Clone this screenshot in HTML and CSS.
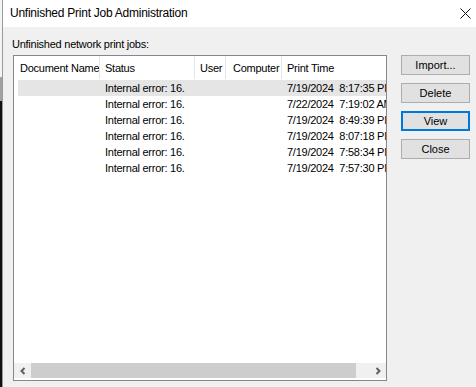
FILE: index.html
```html
<!DOCTYPE html>
<html lang="en">
<head>
  <meta charset="UTF-8">
  <title>Unfinished Print Job Administration</title>
  <link rel="stylesheet" href="styles.css">
</head>
<body>
  <div class="desk"></div>
  <div class="window">
    <div class="titlebar">
      <span class="title">Unfinished Print Job Administration</span>
      <svg class="close" width="11" height="11" viewBox="0 0 11 11">
        <path d="M0.5 0.5 L10.5 10.5 M10.5 0.5 L0.5 10.5" stroke="#111" stroke-width="1" fill="none"/>
      </svg>
    </div>

    <div class="content">
      <div class="left">
        <div class="label">Unfinished network print jobs:</div>
        <div class="list">
          <div class="head">
            <div class="col c-doc">Document Name</div>
            <div class="col c-status">Status</div>
            <div class="col c-user">User</div>
            <div class="col c-comp">Computer</div>
            <div class="col c-time">Print Time</div>
          </div>
          <div class="rows">
            <div class="row selected"><div class="col c-doc"></div><div class="col c-status">Internal error: 16.</div><div class="col c-user"></div><div class="col c-comp"></div><div class="col c-time">7/19/2024  8:17:35 PM</div></div>
            <div class="row"><div class="col c-doc"></div><div class="col c-status">Internal error: 16.</div><div class="col c-user"></div><div class="col c-comp"></div><div class="col c-time">7/22/2024  7:19:02 AM</div></div>
            <div class="row"><div class="col c-doc"></div><div class="col c-status">Internal error: 16.</div><div class="col c-user"></div><div class="col c-comp"></div><div class="col c-time">7/19/2024  8:49:39 PM</div></div>
            <div class="row"><div class="col c-doc"></div><div class="col c-status">Internal error: 16.</div><div class="col c-user"></div><div class="col c-comp"></div><div class="col c-time">7/19/2024  8:07:18 PM</div></div>
            <div class="row"><div class="col c-doc"></div><div class="col c-status">Internal error: 16.</div><div class="col c-user"></div><div class="col c-comp"></div><div class="col c-time">7/19/2024  7:58:34 PM</div></div>
            <div class="row"><div class="col c-doc"></div><div class="col c-status">Internal error: 16.</div><div class="col c-user"></div><div class="col c-comp"></div><div class="col c-time">7/19/2024  7:57:30 PM</div></div>
          </div>
          <div class="hscroll">
            <div class="arrow">
              <svg width="8" height="8" viewBox="0 0 8 8"><path d="M5.5 1 L2.5 4 L5.5 7" stroke="#606060" stroke-width="2" fill="none"/></svg>
            </div>
            <div class="thumb"></div>
            <div class="track"></div>
            <div class="arrow">
              <svg width="8" height="8" viewBox="0 0 8 8"><path d="M2.5 1 L5.5 4 L2.5 7" stroke="#606060" stroke-width="2" fill="none"/></svg>
            </div>
          </div>
        </div>
      </div>

      <div class="buttons">
        <button class="btn">Import...</button>
        <button class="btn">Delete</button>
        <button class="btn default">View</button>
        <button class="btn">Close</button>
      </div>
    </div>
  </div>
</body>
</html>
```

FILE: styles.css
```css
body {
  margin: 0;
  height: 387px;
  overflow: hidden;
  display: flex;
  font-family: 'Liberation Sans', Arial, sans-serif;
  font-size: 11px;
  letter-spacing: -0.25px;
  color: #000;
  background: #f0f0f0;
}

/* strip of the desktop behind the dialog */
.desk {
  width: 2px;
  flex-shrink: 0;
  background: linear-gradient(#f4f4f4 0, #f4f4f4 77px, #a0a0a0 77px, #a0a0a0 101px, #111 101px);
}

.window {
  flex: 1;
  display: flex;
  flex-direction: column;
  border-left: 1px solid #9a9a9a;
  background: #f0f0f0;
}

.titlebar {
  height: 26px;
  background: #fff;
  display: flex;
  align-items: center;
  justify-content: space-between;
  padding: 0 4px 1px 7px;
  font-size: 12px;
}

.close {
  margin-right: 1px;
}

.content {
  display: flex;
  padding: 9px 6px 0 9px;
}

.left {
  display: flex;
  flex-direction: column;
}

.label {
  line-height: 16px;
  margin-bottom: 3px;
}

.list {
  margin-left: 1px;
  width: 372px;
  height: 324px;
  border: 1px solid #828790;
  background: #fff;
  display: flex;
  flex-direction: column;
  overflow: hidden;
}

.head, .row {
  display: flex;
  white-space: pre;
}

.head {
  height: 23px;
  align-items: center;
  margin-bottom: 1px;
}

.head .col {
  height: 100%;
  display: flex;
  align-items: center;
  border-right: 1px solid #e5e5e5;
}

.col {
  flex-shrink: 0;
  box-sizing: border-box;
  padding-left: 5px;
  overflow: hidden;
}

.c-doc { width: 86px; padding-left: 6px; }
.c-status { width: 95px; }
.c-user { width: 31px; }
.c-comp { width: 56px; padding-left: 7px; }
.c-time { width: 120px; }
.head .c-time { border-right: none; }

.rows {
  flex: 1;
}

.row {
  height: 16px;
  line-height: 16px;
}

.row.selected {
  background: linear-gradient(to right, transparent 4px, #e5e5e5 4px);
}

.hscroll {
  height: 15px;
  margin-bottom: 2px;
  display: flex;
  background: #f0f0f0;
}

.arrow {
  width: 17px;
  display: flex;
  align-items: center;
  justify-content: center;
}

.thumb {
  width: 325px;
  background: #cdcdcd;
}

.track {
  flex: 1;
}

.buttons {
  margin-left: 14px;
  padding-top: 19px;
  display: flex;
  flex-direction: column;
  gap: 8px;
}

.btn {
  width: 69px;
  height: 20px;
  padding: 0;
  font: inherit;
  color: #000;
  background: #e1e1e1;
  border: 1px solid #adadad;
}

.btn.default {
  border: 2px solid #0078d7;
}
```
